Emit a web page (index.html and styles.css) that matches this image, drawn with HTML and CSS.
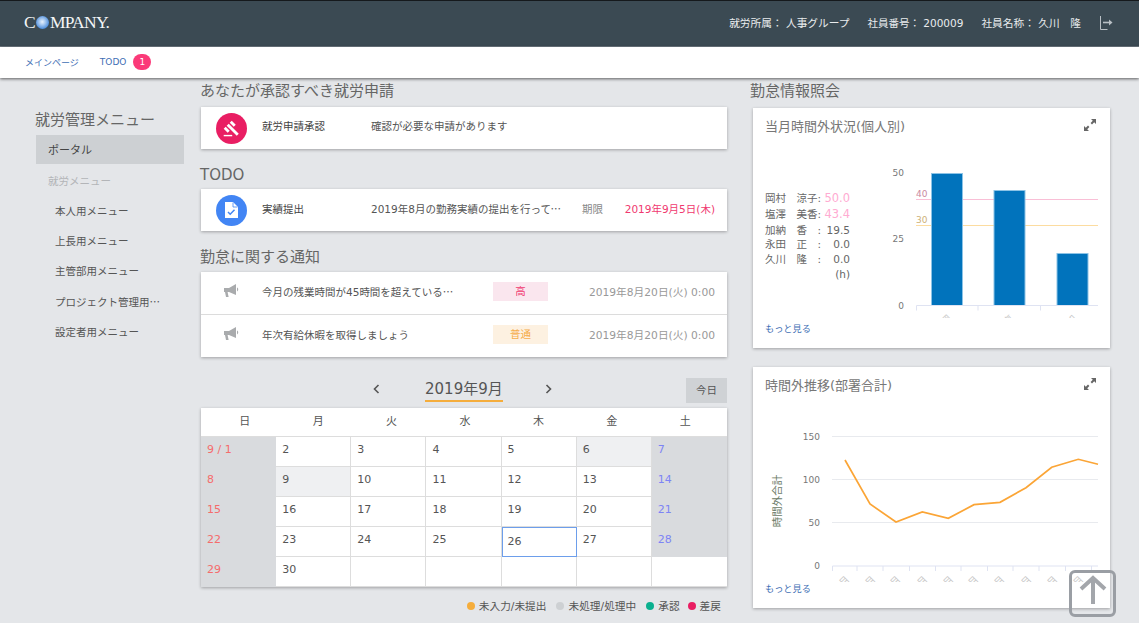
FILE: index.html
```html
<!DOCTYPE html>
<html lang="ja">
<head>
  <meta charset="UTF-8">
  <title>就労管理 - ポータル</title>
  <link rel="stylesheet" href="styles.css">
</head>
<body>
  <!-- Header -->
  <header class="top-bar">
    <div class="logo">C<span class="logo-ball"></span>MPANY.</div>
    <div class="user-info">
      <span class="dept">就労所属： 人事グループ</span>
      <span class="emp-no">社員番号： 200009</span>
      <span class="emp-name">社員名称： 久川　隆</span>
      <svg class="logout" width="14" height="16" viewBox="0 0 14 16" fill="none" stroke="#b9c0c5">
        <path d="M1.5 1v13.5h7" stroke-width="1"/>
        <path d="M4 7.5h7" stroke-width="1.6"/>
        <path d="M10 4.5l3.5 3-3.5 3z" fill="#b9c0c5" stroke="none"/>
      </svg>
    </div>
  </header>

  <nav class="sub-nav">
    <a href="#">メインページ</a>
    <a href="#">TODO</a>
    <span class="nav-badge">1</span>
  </nav>

  <div class="page">
    <!-- Side menu -->
    <aside class="side">
      <h2>就労管理メニュー</h2>
      <div class="side-active">ポータル</div>
      <div class="side-group">就労メニュー</div>
      <ul class="side-list">
        <li>本人用メニュー</li>
        <li>上長用メニュー</li>
        <li>主管部用メニュー</li>
        <li>プロジェクト管理用メニュー</li>
        <li>設定者用メニュー</li>
      </ul>
    </aside>

    <!-- Main column -->
    <main class="main">
      <h3 class="sec-title sec-first">あなたが承認すべき就労申請</h3>
      <div class="card row-card row-up">
        <span class="round-icon icon-red">
          <svg width="17" height="17" viewBox="0 0 24 24" fill="#fff">
            <path d="M1 21h12v2H1z"/>
            <path d="M5.245 8.07l2.83-2.827 14.14 14.142-2.828 2.828z"/>
            <path d="M12.317 1l5.657 5.656-2.83 2.83-5.654-5.66z"/>
            <path d="M3.825 9.485l5.657 5.657-2.828 2.828-5.657-5.657z"/>
          </svg>
        </span>
        <span class="row-name">就労申請承認</span>
        <span class="row-text">確認が必要な申請があります</span>
      </div>

      <h3 class="sec-title">TODO</h3>
      <div class="card row-card">
        <span class="round-icon icon-blue">
          <svg width="13" height="16" viewBox="0 0 13 16">
            <path d="M0 0h8l5 5v11H0z" fill="#fff"/>
            <path d="M8 0.500v4.500h4.500" fill="none" stroke="#4285f4" stroke-width="0.800"/>
            <path d="M3 10l2.200 2.200 4.300-4.400" fill="none" stroke="#4285f4" stroke-width="1.500"/>
          </svg>
        </span>
        <span class="row-name">実績提出</span>
        <span class="row-text row-clip"><span class="num">2019</span>年<span class="num">8</span>月の勤務実績の提出を行ってください</span>
        <span class="row-limit">期限</span>
        <span class="row-date">2019年9月5日(木)</span>
      </div>

      <h3 class="sec-title">勤怠に関する通知</h3>
      <div class="card notice-card">
        <div class="notice">
          <svg class="horn" width="16" height="14" viewBox="0 0 16 14" fill="#a9abad">
            <path d="M0 4h5l7-4v11L5 8H3.600l1 5H2L1 8H0z"/>
            <path d="M13 3.600c1.600.4 1.600 3.400 0 3.800z"/>
          </svg>
          <span class="notice-text">今月の残業時間が<span class="num">45</span>時間を超えている方がいます</span>
          <span class="level level-high">高</span>
          <span class="notice-date">2019年8月20日(火) 0:00</span>
        </div>
        <div class="notice">
          <svg class="horn" width="16" height="14" viewBox="0 0 16 14" fill="#a9abad">
            <path d="M0 4h5l7-4v11L5 8H3.600l1 5H2L1 8H0z"/>
            <path d="M13 3.600c1.600.4 1.600 3.400 0 3.800z"/>
          </svg>
          <span class="notice-text">年次有給休暇を取得しましょう</span>
          <span class="level level-normal">普通</span>
          <span class="notice-date">2019年8月20日(火) 0:00</span>
        </div>
      </div>

      <!-- Calendar -->
      <div class="cal-nav">
        <span class="cal-arrow">
          <svg width="7" height="10" viewBox="0 0 7 10" fill="none" stroke="#555" stroke-width="1.600"><path d="M5.500 1L1.500 5l4 4"/></svg>
        </span>
        <span class="cal-month">2019年9月</span>
        <span class="cal-arrow">
          <svg width="7" height="10" viewBox="0 0 7 10" fill="none" stroke="#555" stroke-width="1.600"><path d="M1.500 1l4 4-4 4"/></svg>
        </span>
        <button class="cal-today">今日</button>
      </div>
      <div class="card calendar">
        <div class="cal-heads">
          <div>日</div><div>月</div><div>火</div><div>水</div><div>木</div><div>金</div><div>土</div>
        </div>
        <div class="cal-days">
          <div class="day sun">9 / 1</div><div class="day">2</div><div class="day">3</div><div class="day">4</div><div class="day">5</div><div class="day off">6</div><div class="day sat">7</div>
          <div class="day sun">8</div><div class="day off">9</div><div class="day">10</div><div class="day">11</div><div class="day">12</div><div class="day">13</div><div class="day sat">14</div>
          <div class="day sun">15</div><div class="day">16</div><div class="day">17</div><div class="day">18</div><div class="day">19</div><div class="day">20</div><div class="day sat">21</div>
          <div class="day sun">22</div><div class="day">23</div><div class="day">24</div><div class="day">25</div><div class="day today">26</div><div class="day">27</div><div class="day sat">28</div>
          <div class="day sun">29</div><div class="day">30</div><div class="day"></div><div class="day"></div><div class="day"></div><div class="day"></div><div class="day"></div>
        </div>
      </div>
      <div class="legend">
        <span><i class="dot dot-orange"></i>未入力/未提出</span>
        <span><i class="dot dot-grey"></i>未処理/処理中</span>
        <span><i class="dot dot-green"></i>承認</span>
        <span class="legend-last"><i class="dot dot-red"></i>差戻</span>
      </div>
    </main>

    <!-- Right column -->
    <section class="right">
      <h3 class="sec-title sec-first sec-right">勤怠情報照会</h3>

      <div class="card chart-card chart-one">
        <div class="chart-title">
          <span>当月時間外状況(個人別)</span>
          <svg width="12" height="12" viewBox="0 0 12 12" fill="#666">
            <path d="M7 0h5v5l-1.800-1.800L8 5.400 6.600 4l2.200-2.200z"/>
            <path d="M5 12H0V7l1.800 1.800L4 6.600 5.400 8 3.200 10.200z"/>
          </svg>
        </div>
        <div class="chart-body">
          <ul class="overtime">
            <li class="big"><span>岡村　涼子:</span><b>50.0</b></li>
            <li class="big"><span>塩澤　美香:</span><b>43.4</b></li>
            <li><span>加納　香　:</span><span>19.5</span></li>
            <li><span>永田　正　:</span><span>0.0</span></li>
            <li><span>久川　隆　:</span><span>0.0</span></li>
            <li class="unit">(h)</li>
          </ul>
          <svg class="bars" width="220" height="158" viewBox="880 160 220 158">
            <g class="axis-label" text-anchor="end">
              <text x="904" y="176">50</text>
              <text x="904" y="242">25</text>
              <text x="904" y="309">0</text>
            </g>
            <line x1="916" x2="1098" y1="199.500" y2="199.500" stroke="#f9bfd6"/>
            <line x1="916" x2="1098" y1="225.500" y2="225.500" stroke="#fcdca0"/>
            <text x="916" y="197" class="mark" fill="#c98a9f">40</text>
            <text x="916" y="223" class="mark" fill="#cdb078">30</text>
            <rect x="931.500" y="173.500" width="31" height="132" fill="#0173bc" stroke="#8cc3e6"/>
            <rect x="994" y="190.500" width="31" height="115" fill="#0173bc" stroke="#8cc3e6"/>
            <rect x="1057" y="253.500" width="31" height="52" fill="#0173bc" stroke="#8cc3e6"/>
            <path d="M916.500 305.500H1098M916.500 305.500v5M978 305.500v5M1040.500 305.500v5" stroke="#dfe3f2" fill="none"/>
            <g class="tick-label">
              <text x="946" y="324" transform="rotate(-45 946 320)">岡</text>
              <text x="1008" y="324" transform="rotate(-45 1008 320)">塩</text>
              <text x="1071" y="324" transform="rotate(-45 1071 320)">加</text>
            </g>
          </svg>
        </div>
        <a class="more" href="#">もっと見る</a>
      </div>

      <div class="card chart-card chart-two">
        <div class="chart-title">
          <span>時間外推移(部署合計)</span>
          <svg width="12" height="12" viewBox="0 0 12 12" fill="#666">
            <path d="M7 0h5v5l-1.800-1.800L8 5.400 6.600 4l2.200-2.200z"/>
            <path d="M5 12H0V7l1.800 1.800L4 6.600 5.400 8 3.200 10.200z"/>
          </svg>
        </div>
        <svg class="line-chart" width="330" height="162" viewBox="770 420 330 162">
          <path d="M832 436.500H1098M832 479.500H1098M832 522.500H1098" stroke="#e8eaee" fill="none"/>
          <g class="axis-label" text-anchor="end">
            <text x="820" y="440">150</text>
            <text x="820" y="483">100</text>
            <text x="820" y="526">50</text>
            <text x="820" y="569">0</text>
          </g>
          <text class="axis-name" transform="translate(781 501) rotate(-90)" text-anchor="middle">時間外合計</text>
          <polyline fill="none" stroke="#fba536" stroke-width="1.700" points="845,460 870,504 896,522 922.300,512 948.300,518.300 974,504.700 1000,502.300 1026,487.700 1051.700,467.300 1078.300,459.300 1098,464.300"/>
          <path d="M832.500 566H1098M832.500 566v5M857 566v5M883 566v5M909.500 566v5M935.500 566v5M961 566v5M987.500 566v5M1013 566v5M1039 566v5M1065.500 566v5M1091.500 566v5" stroke="#dfe3f2" fill="none"/>
          <g class="tick-label">
            <text x="844" y="585" transform="rotate(-45 844 581)">月</text>
            <text x="870" y="585" transform="rotate(-45 870 581)">月</text>
            <text x="895" y="585" transform="rotate(-45 895 581)">月</text>
            <text x="922" y="585" transform="rotate(-45 922 581)">月</text>
            <text x="948" y="585" transform="rotate(-45 948 581)">月</text>
            <text x="973" y="585" transform="rotate(-45 973 581)">月</text>
            <text x="999" y="585" transform="rotate(-45 999 581)">月</text>
            <text x="1026" y="585" transform="rotate(-45 1026 581)">月</text>
            <text x="1052" y="585" transform="rotate(-45 1052 581)">月</text>
            <text x="1078" y="585" transform="rotate(-45 1078 581)">月</text>
          </g>
        </svg>
        <a class="more more-two" href="#">もっと見る</a>
      </div>
    </section>
  </div>

  <!-- Back to top -->
  <a class="to-top" href="#">
    <svg width="28" height="30" viewBox="0 0 28 30" fill="none" stroke="#a3a6ab" stroke-width="4">
      <path d="M14 29V3M2 14L14 3l12 11"/>
    </svg>
  </a>
</body>
</html>
```

FILE: styles.css
```css
/* Reset & Global Styles */
* { margin: 0; padding: 0; box-sizing: border-box; }
html, body { height: 623px; overflow: hidden; }
body {
  font-family: "DejaVu Sans", "Noto Sans CJK JP", sans-serif;
  font-size: 10.5px;
  background-color: #e4e6e9;
  color: #444;
}
a { color: inherit; text-decoration: none; }
ul { list-style: none; }
h2, h3 { font-weight: normal; }
.num { font-family: "DejaVu Sans", sans-serif; }

/* Header */
.top-bar {
  height: 47px;
  background-color: #3b4a53;
  border-top: 1px solid #15191c;
  border-bottom: 1px solid #6d7880;
  display: flex;
  align-items: center;
  justify-content: space-between;
  padding: 0 26px 2px 24px;
}
.logo {
  font-family: "Liberation Serif", serif;
  font-size: 17.5px;
  color: #f4f6f7;
  display: flex;
  align-items: center;
  letter-spacing: -0.75px;
}
.logo-ball {
  width: 13px;
  height: 13px;
  margin: 0 1px;
  border-radius: 50%;
  background: radial-gradient(circle at 48% 45%, #e8f1fb 0%, #a9c9ef 30%, #4f8fdc 70%, #2f69b4 100%);
}
.user-info {
  display: flex;
  align-items: center;
  font-size: 10.7px;
  color: #e9ecee;
}
.dept { margin-right: 18px; }
.emp-no { margin-right: 18px; font-size: 10.5px; }
.emp-name { margin-right: 18px; }

/* Sub navigation */
.sub-nav {
  height: 31px;
  background-color: #fff;
  box-shadow: 0 1px 3px rgba(0, 0, 0, 0.6);
  display: flex;
  align-items: center;
  padding: 0 0 1px 25px;
  font-size: 9px;
  color: #3f6fb5;
  position: relative;
}
.sub-nav a { margin-right: 21px; }
.sub-nav a:nth-child(2) { margin-right: 7px; }
.nav-badge {
  width: 18px;
  height: 16px;
  border-radius: 8px;
  background-color: #fb3a79;
  color: #fff;
  font-size: 9px;
  text-align: center;
  line-height: 16px;
}

/* Page columns */
.page {
  display: flex;
  padding-left: 36px;
}

/* Side menu */
.side {
  width: 148px;
  margin-right: 17px;
  padding-top: 32px;
}
.side h2 {
  font-size: 15px;
  line-height: 20px;
  margin: 0 0 5px -1px;
  color: #666;
}
.side-active {
  height: 29px;
  line-height: 31px;
  padding-left: 12px;
  background-color: #cdd0d3;
  font-size: 11px;
  color: #444;
}
.side-group {
  height: 31px;
  line-height: 33px;
  margin-top: 1px;
  padding-left: 12px;
  color: #b3b5b8;
}
.side-list { margin-top: -0.5px; }
.side-list li {
  height: 30.4px;
  line-height: 30.4px;
  padding-left: 19px;
  width: 126px;
  font-family: "Noto Sans CJK JP", sans-serif;
  white-space: nowrap;
  overflow: hidden;
  text-overflow: ellipsis;
  color: #555;
}

/* Section titles */
.sec-title {
  font-size: 15px;
  line-height: 20px;
  margin: 16px 0 4px -1px;
  color: #666;
}
.sec-first { margin: 3px 0 6px -1px; }
.sec-right { margin-left: -3px; margin-bottom: 7px; }

/* Cards */
.card {
  background-color: #fff;
  box-shadow: 0 1px 3px rgba(0, 0, 0, 0.3);
}
.main { width: 526px; margin-right: 26px; }

.row-card {
  height: 42px;
  display: flex;
  align-items: center;
  padding: 0 12px 0 15px;
}
.row-card .row-name, .row-card .row-text, .row-limit, .row-date { margin-bottom: 3px; }
.row-up .row-name, .row-up .row-text { margin-bottom: 6px; }
.round-icon {
  width: 31px;
  height: 31px;
  border-radius: 50%;
  display: flex;
  align-items: center;
  justify-content: center;
  flex-shrink: 0;
}
.icon-red { background-color: #e91e63; }
.icon-blue { background-color: #4285f4; }
.row-name { width: 109px; margin-left: 15px; flex-shrink: 0; }
.row-text { color: #555; }
.row-clip {
  width: 193px;
  font-family: "Noto Sans CJK JP", sans-serif;
  line-height: 14px;
  white-space: nowrap;
  overflow: hidden;
  text-overflow: ellipsis;
}
.row-limit { margin-left: 18px; color: #888; }
.row-date { margin-left: auto; color: #f0396f; }

/* Notices */
.notice-card { margin-top: 5px; }
.notice {
  height: 42px;
  display: flex;
  align-items: center;
  padding: 0 12px 4px 23px;
}
.notice + .notice { border-top: 1px solid #dcdcdc; height: 43px; }
.horn { flex-shrink: 0; }
.notice-text {
  width: 194px;
  margin: 2px 37px 0 22px;
  font-family: "Noto Sans CJK JP", sans-serif;
  line-height: 14px;
  white-space: nowrap;
  overflow: hidden;
  text-overflow: ellipsis;
  color: #555;
}
.level {
  width: 55px;
  height: 19px;
  line-height: 19px;
  text-align: center;
}
.level-high { background-color: #fae6ee; color: #f0396f; }
.level-normal { background-color: #fdf1e1; color: #f5ad4b; }
.notice-date { margin-left: auto; font-size: 10.7px; color: #999; }

/* Calendar */
.cal-nav {
  height: 25px;
  margin: 21px 0 5px;
  display: flex;
  align-items: center;
  position: relative;
}
.cal-arrow { margin-left: 172px; width: 7px; display: flex; margin-top: -4px; }
.cal-month {
  margin-left: 45px;
  height: 23px;
  line-height: 20px;
  font-size: 15px;
  border-bottom: 2px solid #f5ad3c;
  color: #555;
}
.cal-month + .cal-arrow { margin-left: 42px; }
.cal-today {
  margin-left: auto;
  width: 41px;
  height: 25px;
  border: none;
  padding-bottom: 2px;
  background-color: #cfd2d5;
  font-family: inherit;
  font-size: 10.5px;
  color: #555;
}
.cal-heads {
  display: grid;
  grid-template-columns: repeat(7, 1fr);
  padding: 0 5px 0 7px;
  height: 29px;
  line-height: 27px;
  text-align: center;
  font-size: 11px;
  color: #555;
  border-bottom: 1px solid #ddd;
}
.cal-days {
  display: grid;
  grid-template-columns: repeat(7, 1fr);
}
.day {
  height: 30px;
  padding: 5px 6px;
  line-height: 15px;
  font-size: 11px;
  color: #555;
  border-right: 1px solid #ddd;
  border-bottom: 1px solid #ddd;
}
.day:nth-child(7n) { border-right: none; }
.sun { background-color: #d9dbde; color: #f56c6c; border-color: #d9dbde; }
.sat { background-color: #d9dbde; color: #7d84f5; border-color: #d9dbde; }
.off { background-color: #eff0f2; }
.today { outline: 1px solid #6d9eeb; outline-offset: -1px; padding-top: 7px; }
.legend {
  display: flex;
  justify-content: flex-end;
  gap: 10px;
  margin-top: 11px;
  padding-right: 6px;
  font-size: 10.7px;
  color: #555;
}
.legend span { display: flex; align-items: center; }
.legend .legend-last { margin-left: -2px; }
.dot {
  width: 8px;
  height: 8px;
  border-radius: 50%;
  margin-right: 4px;
}
.dot-orange { background-color: #f5ad3c; }
.dot-grey { background-color: #cdd0d3; }
.dot-green { background-color: #0bb08f; }
.dot-red { background-color: #e91e63; }

/* Right column */
.right { width: 357px; }
.chart-card {
  padding: 0 10px 0 12px;
  height: 240px;
}
.chart-two { height: 241px; margin-top: 19px; }
.chart-title {
  height: 36px;
  display: flex;
  justify-content: space-between;
  align-items: center;
  font-size: 13px;
  color: #777;
  padding: 0 4px 2px 0;
}
.chart-body {
  height: 175px;
  padding-top: 16px;
  display: flex;
  justify-content: space-between;
  align-items: flex-start;
}
.overtime { width: 85px; margin-top: 29.5px; color: #666; }
.overtime li {
  display: flex;
  justify-content: space-between;
  height: 14.7px;
  line-height: 14.7px;
}
.overtime .big { height: 16.5px; line-height: 16.5px; }
.overtime b { font-weight: normal; font-size: 11.5px; color: #ffabd2; }
.overtime .unit { justify-content: flex-end; }
.line-chart {
  display: block;
  margin-left: 5px;
  margin-top: 17px;
}
.axis-label { font-size: 9px; fill: #777; }
.mark { font-size: 9px; }
.axis-name { font-size: 10.5px; fill: #6b7a66; }
.tick-label { font-size: 10px; fill: #c9c9c9; text-anchor: middle; }
.more {
  display: block;
  height: 20px;
  line-height: 20px;
  font-size: 9.2px;
  color: #3f6fb5;
}
.more-two { margin-top: -3.5px; }

/* Back to top button */
.to-top {
  position: fixed;
  left: 1069px;
  top: 570px;
  width: 47px;
  height: 47px;
  border: 3px solid #9a9ea4;
  border-radius: 6px;
  display: flex;
  align-items: center;
  justify-content: center;
  padding-bottom: 8px;
}
```
